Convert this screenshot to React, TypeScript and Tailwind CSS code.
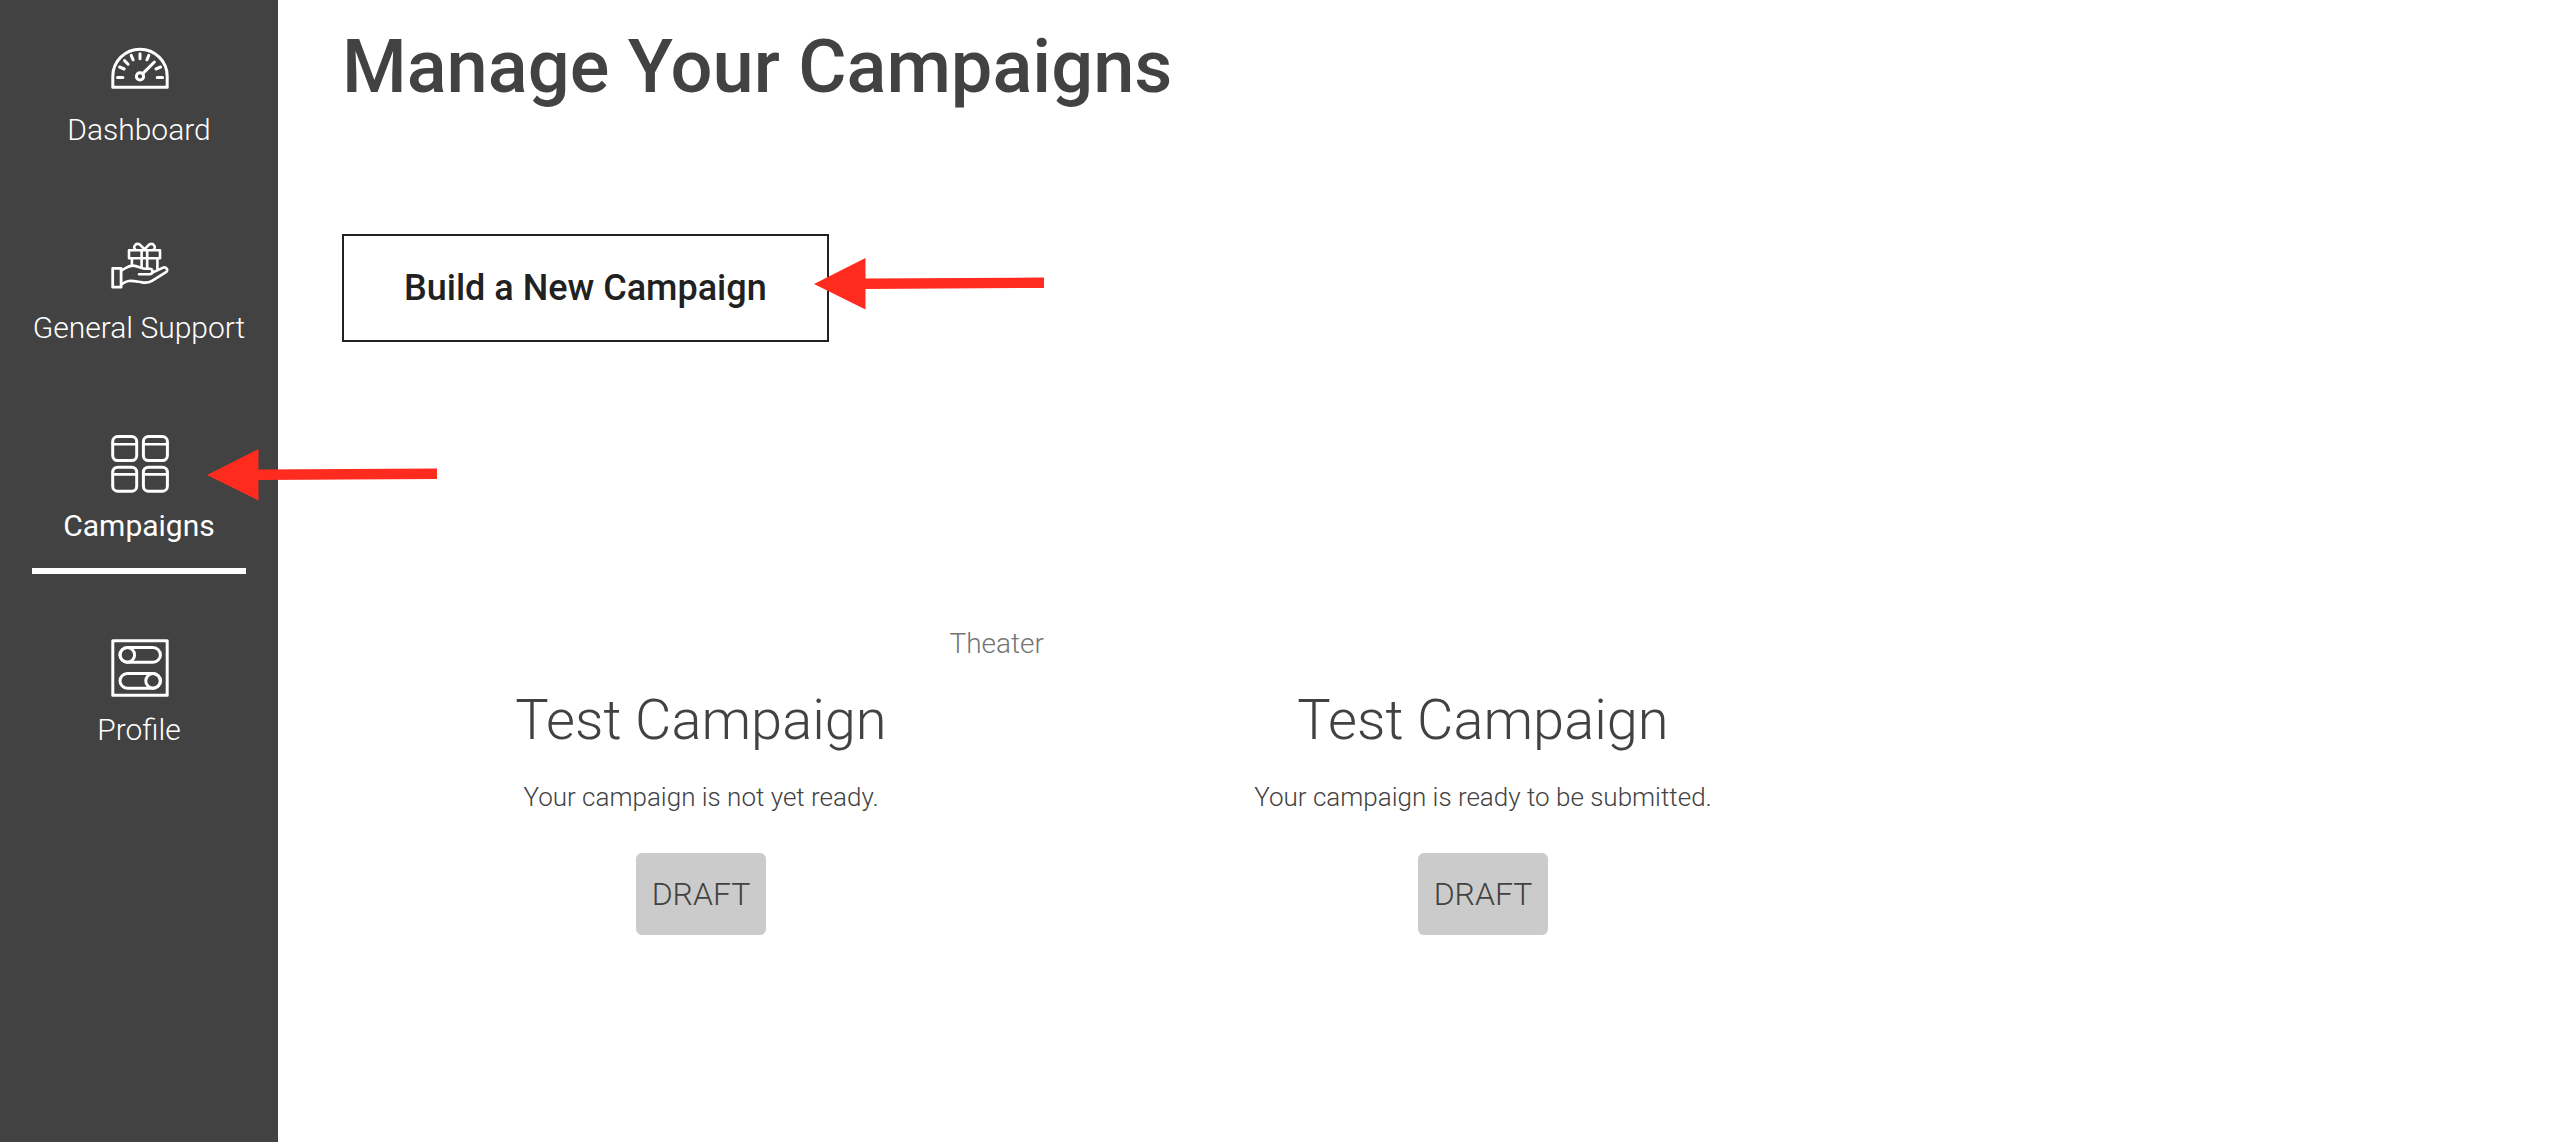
import type { ReactNode } from "react";

function Icon({ children }: { children: ReactNode }) {
  return (
    <svg
      viewBox="0 0 58 58"
      className="ml-0.5 size-[58px] shrink-0"
      fill="none"
      stroke="currentColor"
      strokeWidth="3"
      strokeLinecap="round"
      strokeLinejoin="round"
      aria-hidden="true"
    >
      {children}
    </svg>
  );
}

const DashboardIcon = (
  <Icon>
    <path d="M1.8 48.2V37.4a27.2 27.2 0 0 1 54.4 0v10.8z" />
    <circle cx="29" cy="37.4" r="3.6" />
    <path d="M32 34.4 43.4 23M6.5 38.5h5.4M46.2 38.5h5.4M8.6 28l4.6 2M13.5 21.6l3.6 3.6M20.2 16.4l1.9 4.4M29 14.8v5M37.8 16.4l-1.9 4.4M49.6 28l-4.6 2" />
  </Icon>
);

const SupportIcon = (
  <Icon>
    <path strokeWidth="2.8" d="M1.7 31.4h8.4v18.8H1.7z" />
    <path
      strokeWidth="2.6"
      d="M11 33.2c4-2.2 6-4.6 11-4.6 5 0 8 3.2 13 3.2h3.6c3.8 0 3.8 5.4 0 5.4H28M42 35.4l9.6-4.6c3.4-1.4 6.4 2 3.4 4.4L41 43.8c-3.4 2-6.4 2.2-10 1.6-5-.8-9-2-13.4-1.4-3 .3-4.6 1.6-6.6 3"
    />
    <path
      strokeWidth="2.6"
      d="M18 13.2h31v8H18zM20.9 21.2v7M46.4 21.2V32M30.6 13.2v17.6M36.2 13.2v18M30.6 13.2h-5.4c-4.4-2.4-.6-8 3.4-5.8l4.9 4.8 4.9-4.8c4-2.2 7.8 3.4 3.4 5.8h-5.4"
    />
  </Icon>
);

const CampaignsIcon = (
  <Icon>
    <rect x="1.7" y="1.6" width="24" height="24" rx="5" />
    <rect x="32.4" y="1.6" width="24" height="24" rx="5" />
    <rect x="1.7" y="32.2" width="24" height="24" rx="5" />
    <rect x="32.4" y="32.2" width="24" height="24" rx="5" />
    <path strokeWidth="2.6" d="M2 9.3h23.5M32.6 9.3h23.5M2 39.4h23.5M32.6 39.4h23.5" />
  </Icon>
);

const ProfileIcon = (
  <Icon>
    <path d="M1.8 1.8h54.4v54.4H1.8z" />
    <rect x="9" y="8.6" width="40.4" height="14.6" rx="7.3" />
    <circle cx="16.3" cy="15.9" r="7.3" />
    <rect x="9" y="34.6" width="40.4" height="14.6" rx="7.3" />
    <circle cx="42.1" cy="41.9" r="7.3" />
  </Icon>
);

const navItems = [
  { label: "Dashboard", icon: DashboardIcon, active: false },
  { label: "General Support", icon: SupportIcon, active: false },
  { label: "Campaigns", icon: CampaignsIcon, active: true },
  { label: "Profile", icon: ProfileIcon, active: false },
];

const campaigns = [
  { title: "Test Campaign", category: "Theater", note: "Your campaign is not yet ready.", status: "DRAFT" },
  { title: "Test Campaign", category: "", note: "Your campaign is ready to be submitted.", status: "DRAFT" },
];

function Arrow({ className }: { className: string }) {
  return (
    <svg
      viewBox="0 0 231 52"
      className={`pointer-events-none absolute z-10 h-[52px] w-[231px] max-w-none ${className}`}
      fill="#ff2b1f"
      aria-hidden="true"
    >
      <path d="M0 26 51.5 0v20.6L230 19.6v10.3L51.5 31v20.5z" />
    </svg>
  );
}

export default function App() {
  return (
    <div className="flex min-h-screen bg-white font-['Roboto',sans-serif] text-[#424242]">
      <nav className="flex w-[278px] shrink-0 flex-col gap-[65px] bg-[#424242] px-8 pt-[39px] text-white">
        {navItems.map((item) => (
          <a
            key={item.label}
            href="#"
            aria-current={item.active ? "page" : undefined}
            className={`relative flex flex-col items-center pb-6 ${
              item.active ? "border-b-6 border-white font-normal" : "font-light"
            }`}
          >
            {item.icon}
            <span className="mt-[15px] text-[30px] leading-9 whitespace-nowrap">{item.label}</span>
            {item.active && <Arrow className="top-3.5 left-[175px]" />}
          </a>
        ))}
      </nav>

      <main className="min-w-0 flex-1 px-16 pt-6">
        <h1 className="text-[74px] leading-[86px] font-medium">Manage Your Campaigns</h1>

        <div className="relative mt-[124px] w-fit">
          <button
            type="button"
            className="h-[108px] border-2 border-[#212121] px-[60px] text-[36px] font-medium text-[#212121]"
          >
            Build a New Campaign
          </button>
          <Arrow className="top-6 left-[472px]" />
        </div>

        <section className="mt-[286px] flex flex-wrap gap-16">
          {campaigns.map((c) => (
            <article key={c.note} className="flex w-[718px] flex-col items-center px-4">
              <p className="h-8 self-end text-[28px] leading-8 font-light text-[#757575]">{c.category}</p>
              <h2 className="mt-[27px] text-[56px] leading-[66px] font-light">{c.title}</h2>
              <p className="mt-[28px] text-[26px] leading-8 font-light">{c.note}</p>
              <span className="mt-10 rounded-md bg-[#cbcbcb] px-4 py-[22px] text-[32px] leading-[38px] font-light">
                {c.status}
              </span>
            </article>
          ))}
        </section>
      </main>
    </div>
  );
}
